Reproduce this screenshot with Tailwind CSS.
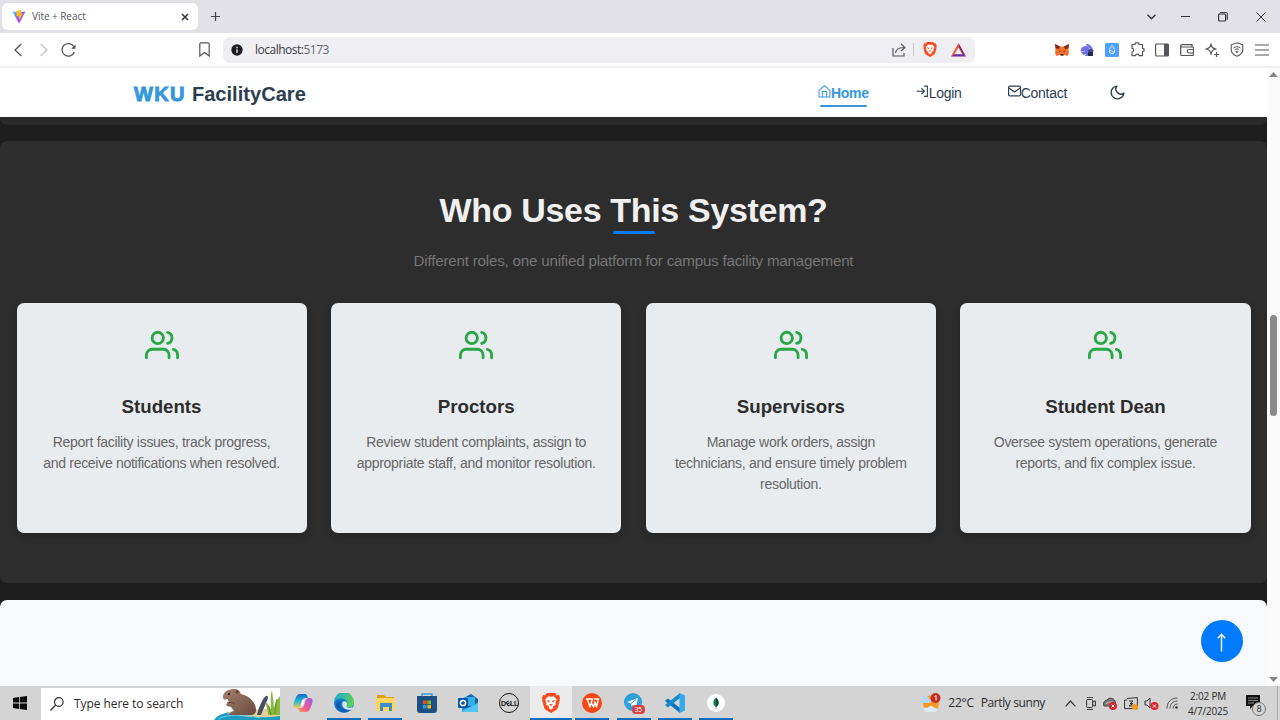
<!DOCTYPE html>
<html lang="en">
<head>
<meta charset="utf-8">
<title>Vite + React</title>
<script src="https://cdn.jsdelivr.net/npm/@tailwindcss/browser@4"></script>
</head>
<body class="w-[1280px] h-[720px] overflow-hidden flex flex-col bg-white font-['Liberation_Sans',Arial,sans-serif]">
<svg class="hidden">
  <symbol id="users" viewBox="0 0 24 24" fill="none" stroke="currentColor" stroke-width="2" stroke-linecap="round" stroke-linejoin="round"><path d="M17 21v-2a4 4 0 0 0-4-4H5a4 4 0 0 0-4 4v2"/><circle cx="9" cy="7" r="4"/><path d="M23 21v-2a4 4 0 0 0-3-3.87M16 3.13a4 4 0 0 1 0 7.75"/></symbol>
  <symbol id="lion" viewBox="0 0 20 22"><path d="M5.500 0h9l2 2.300 2-.3 1.500 3-.5 2 .3 1-2.300 8.500-1.500 2L10 22l-6-3.500-1.500-2L.2 8l.3-1L0 5l1.500-3 2 .3z" fill="#fb4a1d"/><path d="M7 3.500l3 .6 3-.6 3.500 4-1.500 3.500.3 2-3.300 2 .5 1.500L10 18.500 7.500 16.500 8 15l-3.300-2 .3-2-1.500-3.500z" fill="#fff"/><path d="M5.300 7.800l3 .5.300 1.500-1 .6zM14.700 7.800l-3 .5-.3 1.500 1 .6zM8 12.800l2-.8 2 .8-2 1.600z" fill="#fb4a1d"/></symbol>
</svg>

<!-- Tab strip -->
<div class="h-[33px] shrink-0 bg-[#e2e1e7] flex items-center pl-[2px] font-['Open_Sans','Noto_Sans',sans-serif]">
  <div class="w-[196px] h-[27px] bg-white rounded-[6px] flex items-center pl-[10px] pr-[9px]">
    <svg class="w-[14px] h-[14px]" viewBox="0 0 14 14"><defs><linearGradient id="v" x1="0" y1="0" x2="1" y2="1"><stop offset="0" stop-color="#41c9ff"/><stop offset=".6" stop-color="#a044f0"/><stop offset="1" stop-color="#bd34fe"/></linearGradient></defs><path d="M.5 1.500 7 2.500l6.500-1L7 13.500z" fill="url(#v)"/><path d="M4.500 1 9 0l.5 4h1.500L7 10 6.500 6H4.500z" fill="#ffb91c"/></svg>
    <span class="ml-[6px] text-[10px] text-[#55555c] tracking-[-0.050px]">Vite + React</span>
    <svg class="ml-auto w-[8px] h-[8px]" viewBox="0 0 8 8" stroke="#333" stroke-width="1.500"><path d="M1 1l6 6M7 1 1 7"/></svg>
  </div>
  <svg class="ml-[13px] w-[9px] h-[9px]" viewBox="0 0 9 9" stroke="#444" stroke-width="1.200"><path d="M4.500 0v9M0 4.500h9"/></svg>
  <div class="ml-auto flex items-center pr-[14px] text-[#333]">
    <svg class="w-[9px] h-[6px]" viewBox="0 0 9 6" fill="none" stroke="currentColor" stroke-width="1.400"><path d="M.5.8l4 4 4-4"/></svg>
    <svg class="ml-[25px] w-[9px] h-[3px]" viewBox="0 0 9 3"><path d="M0 1h9v1H0z" fill="currentColor"/></svg>
    <svg class="ml-[28px] w-[10px] h-[10px]" viewBox="0 0 10 10" fill="none" stroke="currentColor"><rect x=".6" y="2" width="7" height="7" rx="1" stroke-width="1.200"/><path d="M2 .6h6.500a.8.8 0 0 1 .8.8V8"/></svg>
    <svg class="ml-[28px] w-[10px] h-[10px]" viewBox="0 0 10 10" stroke="currentColor" stroke-width="1"><path d="M.5.5l9 9M9.500.5l-9 9"/></svg>
  </div>
</div>

<!-- Address toolbar -->
<div class="h-[35px] shrink-0 flex items-center border-b-2 border-[#f0f0f2] pl-[14px] text-[#55555c] font-['Open_Sans','Noto_Sans',sans-serif]">
  <svg class="w-[8px] h-[14px]" viewBox="0 0 8 14" fill="none" stroke="currentColor" stroke-width="1.300"><path d="M7.300 1 1 7l6.300 6"/></svg>
  <svg class="ml-[18px] w-[8px] h-[14px]" viewBox="0 0 8 14" fill="none" stroke="#c2c2c6" stroke-width="1.300"><path d="M.7 1 7 7 .7 13"/></svg>
  <svg class="ml-[13px] w-[15px] h-[15px]" viewBox="0 0 15 15" fill="none" stroke="currentColor" stroke-width="1.300"><path d="M13 5a6.300 6.300 0 1 0 .3 5"/><path d="M14.500 2.500v4.300h-4.300z" fill="currentColor" stroke="none"/></svg>
  <svg class="ml-[123px] w-[11px] h-[15px]" viewBox="0 0 11 15" fill="none" stroke="currentColor" stroke-width="1.200"><path d="M.8 2a1.200 1.200 0 0 1 1.200-1.200h7A1.200 1.200 0 0 1 10.200 2v12L5.500 10.500.8 14z"/></svg>
  <div class="ml-[13px] w-[752px] h-[26px] bg-[#efeef3] rounded-[7px] flex items-center pl-[8px] pr-[9px]">
    <svg class="w-[12px] h-[12px]" viewBox="0 0 12 12"><circle cx="6" cy="6" r="5.700" fill="#1c1c20"/><path d="M5.300 5.200h1.400V9H5.300zM5.300 2.800h1.400v1.400H5.300z" fill="#ddd"/></svg>
    <span class="ml-[12px] text-[12px] tracking-[-0.500px] text-[#3b3b42]">localhost:<span class="text-[#66666d]">5173</span></span>
    <svg class="ml-auto w-[14px] h-[14px]" viewBox="0 0 14 14" fill="none" stroke="currentColor" stroke-width="1.200"><path d="M1 5v8h11v-3M3.500 10c.5-4 3-5.500 8.500-5.500M9 1l4 3.500-4 3.500"/></svg>
    <span class="ml-[7px] w-px h-[13px] bg-[#ccccd2]"></span>
    <svg class="ml-[9px] w-[14px] h-[15px]" viewBox="0 0 20 22"><use href="#lion"/></svg>
    <svg class="ml-[14px] w-[15px] h-[14px] mt-px" viewBox="0 0 15 14"><path d="M7.500 0 0 13.500 3.500 11.300l4-7z" fill="#f9502a"/><path d="M7.500 0 15 13.500l-3.500-2.200-4-7z" fill="#8f1f62"/><path d="M0 13.500h15l-3.500-2.300h-8z" fill="#672a96"/></svg>
  </div>
  <div class="ml-auto pr-[11px] flex items-center gap-[11px]">
    <svg class="w-[14px] h-[14px]" viewBox="0 0 14 14"><path d="M0 1l5 2.500h4L14 1l-.6 5 .6 4-1.500 3L9 12l-2 1-2-1-3.500 1L0 10l.6-4z" fill="#f5702c"/><path d="M0 1l5 2.500L4 6 .6 5.500zM14 1 9 3.500 10 6l3.400-.5z" fill="#7a2d1c"/><path d="M3.500 7.500l2 .8-.2 1zM10.500 7.500l-2 .8.2 1zM5.500 11h3v1.500h-3z" fill="#2a2430"/></svg>
    <svg class="w-[14px] h-[14px]" viewBox="0 0 14 14"><path d="M1 9C0 5 3 3 7 3L6 1c3 0 6 2 6.500 4.500L14 8l-2 1-1 4H5l1-2-3 1z" fill="#6e6fe6"/><path d="M7 3c1 1 2 1 3 3M1 9l4-1" stroke="#b9baf8"/><path d="M8 8.500h5V13H8z" fill="#262b48"/><path d="M9 8.500V7h3v1.500" fill="none" stroke="#262b48"/></svg>
    <svg class="w-[14px] h-[14px]" viewBox="0 0 14 14"><rect width="14" height="14" rx="1.500" fill="#4da2ff"/><path d="M7 2.500C6 4.200 4.300 6 4.300 8a2.700 2.700 0 0 0 5.400 0C9.700 6 8 4.200 7 2.500z" fill="none" stroke="#e0efff" stroke-width="1"/><path d="M5 7c1 2 2.800.5 4 2.300" fill="none" stroke="#e0efff" stroke-width=".9"/></svg>
    <svg class="w-[15px] h-[15px] -mr-px" viewBox="0 0 15 15" fill="none" stroke="currentColor" stroke-width="1.200" stroke-linejoin="round"><path d="M2 2.500h3c0-2.400 4-2.400 4 0h3.500v3.800c2.300 0 2.300 3.400 0 3.400v4H9c0-2-3.500-2-3.500 0H2V10c2.200 0 2.200-3.600 0-3.600z"/></svg>
    <svg class="w-[14px] h-[14px]" viewBox="0 0 14 14"><rect x=".6" y="1" width="12.800" height="12" rx="1" fill="none" stroke="currentColor" stroke-width="1.200"/><path d="M9 1h4.500v12H9z" fill="currentColor"/></svg>
    <svg class="w-[14px] h-[14px]" viewBox="0 0 14 14" fill="none" stroke="currentColor" stroke-width="1.200"><path d="M12 4V1.600H2C.3 1.600.3 4 2 4h10.500a1 1 0 0 1 1 1v6.500a1 1 0 0 1-1 1H2a1.300 1.300 0 0 1-1.300-1.300V2.500M13.500 6.500H9a1.500 1.500 0 0 0 0 3.500h4.500"/></svg>
    <svg class="w-[14px] h-[14px]" viewBox="0 0 14 14" fill="none" stroke="currentColor" stroke-width="1.200" stroke-linejoin="round"><path d="M6 .8c.6 3.600 1.600 4.500 5.200 5.200C7.600 6.700 6.700 7.700 6 11.300 5.300 7.700 4.300 6.700.8 6 4.300 5.300 5.400 4.400 6 .8zM11.500 9v5M9 11.500h5"/></svg>
    <svg class="w-[14px] h-[15px]" viewBox="0 0 14 15" fill="none" stroke="currentColor"><path d="M7 .8l5.800 2v4.700c0 3-2.500 5.500-5.800 6.700C3.700 13 1.200 10.500 1.200 7.500V2.800z" stroke-width="1.100"/><path d="M3.500 6c2-1.800 5-1.800 7 0M4.700 7.800c1.400-1.200 3.200-1.200 4.600 0"/><circle cx="7" cy="9.700" r=".7" fill="currentColor"/></svg>
    <svg class="w-[14px] h-[12px]" viewBox="0 0 14 12" stroke="currentColor" stroke-width="1.200"><path d="M0 1h14M0 6h14M0 11h14"/></svg>
  </div>
</div>

<!-- Viewport -->
<div class="h-[618px] shrink-0 flex">
  <main class="w-[1267px] h-full bg-[#1e1e1e] flex flex-col relative">
    <header class="h-[49px] shrink-0 bg-white flex items-center pl-[134px] pr-[141px] text-[#2c3e50]">
      <div class="text-[20.100px] leading-[24px] font-bold flex items-center mt-[3px] whitespace-pre"><span class="text-[#3498db] tracking-[1.300px] [-webkit-text-stroke:0.900px_#3498db]">WKU</span><span class="ml-[6px]">FacilityCare</span></div>
      <nav class="ml-auto flex items-center text-[14px] leading-[16px] tracking-[-0.270px]">
        <a class="flex flex-col font-bold text-[#3498db] pt-[7px]">
          <span class="flex"><svg class="w-[13px] h-[13px]" viewBox="0 0 24 24" fill="none" stroke="currentColor" stroke-width="1.900" stroke-linejoin="round"><path d="M2 10 12 1l10 9v12H2zM8 22V12h8v10"/></svg>Home</span>
          <span class="mt-[4px] mx-[2px] h-[2.500px] rounded bg-[#3498db]"></span>
        </a>
        <a class="flex ml-[47px]"><svg class="w-[13px] h-[13px]" viewBox="0 0 24 24" fill="none" stroke="currentColor" stroke-width="2"><path d="M15 2h6v19h-6M1 11.500h14M10 6l5.500 5.500L10 17"/></svg>Login</a>
        <a class="flex ml-[46px]"><svg class="w-[13px] h-[13px]" viewBox="0 0 24 24" fill="none" stroke="currentColor" stroke-width="2" stroke-linejoin="round"><rect x="1" y="2" width="22" height="18" rx="2"/><path d="M1 5l11 8 11-8"/></svg>Contact</a>
        <svg class="ml-[42px] w-[17px] h-[17px]" viewBox="0 0 24 24" fill="none" stroke="currentColor" stroke-width="2" stroke-linejoin="round"><path d="M21 12.790A9 9 0 1 1 11.210 3 7 7 0 0 0 21 12.790z"/></svg>
      </nav>
    </header>
    <div class="h-[8px] shrink-0 bg-[#2a2a2a] rounded-b-[7px]"></div>
    <section class="mt-[16px] h-[442px] shrink-0 bg-[#2d2d2d] rounded-[7px] px-[16.500px] flex flex-col items-center">
      <h2 class="mt-[49px] text-[34px] leading-[40px] tracking-[-0.320px] font-bold text-[#f0f0f0] whitespace-nowrap">Who Uses This System?</h2>
      <span class="mt-px w-[42px] h-[3px] rounded bg-[#007bff]"></span>
      <p class="mt-[16px] text-[15.200px] leading-[22px] tracking-[-0.220px] text-[#757575] whitespace-nowrap">Different roles, one unified platform for campus facility management</p>
      <div class="mt-[31px] w-full h-[230px] grid grid-cols-4 gap-[24.600px] text-center">
        <article class="bg-[#e9ecef] rounded-[7px] shadow-[0_3px_8px_rgba(0,0,0,.2)] flex flex-col items-center">
          <svg class="mt-[25px] w-[34px] h-[34px] text-[#28a745]"><use href="#users"/></svg>
          <h3 class="mt-[33px] text-[18.700px] leading-[24px] font-bold text-[#2d2d2d]">Students</h3>
          <p class="mt-[12.500px] text-[14px] leading-[21.400px] tracking-[-0.290px] text-[#666] whitespace-nowrap">Report facility issues, track progress,<br>and receive notifications when resolved.</p>
        </article>
        <article class="bg-[#e9ecef] rounded-[7px] shadow-[0_3px_8px_rgba(0,0,0,.2)] flex flex-col items-center">
          <svg class="mt-[25px] w-[34px] h-[34px] text-[#28a745]"><use href="#users"/></svg>
          <h3 class="mt-[33px] text-[18.700px] leading-[24px] font-bold text-[#2d2d2d]">Proctors</h3>
          <p class="mt-[12.500px] text-[14px] leading-[21.400px] tracking-[-0.290px] text-[#666] whitespace-nowrap">Review student complaints, assign to<br>appropriate staff, and monitor resolution.</p>
        </article>
        <article class="bg-[#e9ecef] rounded-[7px] shadow-[0_3px_8px_rgba(0,0,0,.2)] flex flex-col items-center">
          <svg class="mt-[25px] w-[34px] h-[34px] text-[#28a745]"><use href="#users"/></svg>
          <h3 class="mt-[33px] text-[18.700px] leading-[24px] font-bold text-[#2d2d2d]">Supervisors</h3>
          <p class="mt-[12.500px] text-[14px] leading-[21.400px] tracking-[-0.290px] text-[#666] whitespace-nowrap">Manage work orders, assign<br>technicians, and ensure timely problem<br>resolution.</p>
        </article>
        <article class="bg-[#e9ecef] rounded-[7px] shadow-[0_3px_8px_rgba(0,0,0,.2)] flex flex-col items-center">
          <svg class="mt-[25px] w-[34px] h-[34px] text-[#28a745]"><use href="#users"/></svg>
          <h3 class="mt-[33px] text-[18.700px] leading-[24px] font-bold text-[#2d2d2d]">Student Dean</h3>
          <p class="mt-[12.500px] text-[14px] leading-[21.400px] tracking-[-0.290px] text-[#666] whitespace-nowrap">Oversee system operations, generate<br>reports, and fix complex issue.</p>
        </article>
      </div>
    </section>
    <section class="mt-[17px] flex-1 bg-[#f8f9fa] rounded-t-[7px]"></section>
    <button class="absolute right-[24px] bottom-[24px] w-[42px] h-[42px] rounded-full bg-[#007bff] flex items-center justify-center" aria-label="Back to top">
      <svg class="w-[9px] h-[19px] mt-[3px] mr-px" viewBox="0 0 9 19" fill="none" stroke="#fff" stroke-width="1.400"><path d="M4.500 18.500V1.500M.8 5.200 4.500 1.300l3.700 3.900"/></svg>
    </button>
  </main>
  <div class="w-[13px] bg-[#fbfbfb] flex flex-col items-center py-[4px]">
    <svg class="w-[9px] h-[5px]" viewBox="0 0 9 5"><path d="M4.500 0 9 5H0z" fill="#858585"/></svg>
    <span class="mt-[238px] w-[7px] h-[101px] rounded-full bg-[#8a8a8a]"></span>
    <svg class="mt-auto w-[9px] h-[5px]" viewBox="0 0 9 5"><path d="M4.500 5 9 0H0z" fill="#858585"/></svg>
  </div>
</div>

<!-- Taskbar -->
<div class="h-[34px] shrink-0 bg-[#d4d4d4] flex items-center text-[#2b2b2b] font-['Open_Sans','Noto_Sans',sans-serif]">
  <div class="w-[41px] pl-[13px]"><svg class="w-[14px] h-[14px]" viewBox="0 0 14 14" fill="#0a0a0a"><path d="M0 2l6-.9v5.500H0zM6.800 1 14 0v6.600H6.800zM0 7.400h6v5.500L0 12zM6.800 7.400H14V14l-7.200-1z"/></svg></div>
  <div class="w-[239px] h-[32px] mt-px bg-white flex items-center pl-[9px]">
    <svg class="w-[14px] h-[14px]" viewBox="0 0 14 14" fill="none" stroke="#333" stroke-width="1.200"><circle cx="8.800" cy="5" r="4.300"/><path d="M5.700 8 .5 13.500"/></svg>
    <span class="ml-[10px] text-[12px] tracking-[-0.060px] whitespace-nowrap">Type here to search</span>
    <svg class="ml-auto w-[66px] h-[32px]" viewBox="0 0 66 32"><defs><linearGradient id="fur" x1="0" y1="0" x2="1" y2="1"><stop offset="0" stop-color="#a48270"/><stop offset="1" stop-color="#6a4a3d"/></linearGradient></defs><path d="M0 32c3-5 12-9 28-9s30 2 38 5v4z" fill="#1d9cc0"/><path d="M12 25c14-4 38-3 54-5v8c-16 2-34 2-54-3z" fill="#e2d199"/><path d="M4 31c10-5 26-5 42-1" stroke="#69cfe0" fill="none"/><path d="M43 27c2-8 5-16 9-19 3-1 2 4 0 7-2 5-4 9-5 12z" fill="#4c4c66"/><path d="M9 8c1-5 6-7 11-7 4 0 6 2 7 5 9 2 15 9 15 16 0 3-2 5-5 5H16c-2-1 0-3 4-4l-3-4-4-1c-2-2 0-3 2-3l-1-3c-3 0-6-1-5-4z" fill="url(#fur)"/><path d="M13 15c3-1 6-1 8 1" fill="none" stroke="#5b3f35"/><circle cx="15" cy="6" r="1.100" fill="#1f1514"/><circle cx="23" cy="4" r="1.400" fill="#5b3f35"/><path d="M12 11h2v2h-1z" fill="#fff"/><path d="M54 27c-1-8-2-11-3-13 4 2 5 5 6 8 0-9-1-15 1-20 1 9 2 14 2 19 1-6 3-9 6-13v19z" fill="#8cb83c"/><path d="M57 27c-1-5-2-8-3-9M61 26c0-6 1-12 2-15" stroke="#4f8a2e" fill="none"/></svg>
  </div>
  <div class="ml-[2px] w-[455px] h-full grid grid-cols-11">
    <div class="flex flex-col items-center"><svg class="mt-[7px] w-[20px] h-[20px]" viewBox="0 0 20 20"><defs><linearGradient id="c1" x1="0" y1="0" x2="0" y2="1"><stop offset="0" stop-color="#1768c9"/><stop offset=".5" stop-color="#27b9d4"/><stop offset="1" stop-color="#f2c744"/></linearGradient><linearGradient id="c2" x1="1" y1="0" x2="0" y2="1"><stop offset="0" stop-color="#9560ec"/><stop offset=".6" stop-color="#f05a91"/><stop offset="1" stop-color="#fba15b"/></linearGradient></defs><path d="M7 1h5c2 0 2 2 3 4h-3c-2 0-3 2-4 6-1 3-2 4-4 4H3c-3 0-3-3-2-6l2-5c1-2 2-3 4-3z" fill="url(#c1)"/><path d="M13 19H8c-2 0-2-2-3-4h3c2 0 3-2 4-6 1-3 2-4 4-4h1c3 0 3 3 2 6l-2 5c-1 2-2 3-4 3z" fill="url(#c2)"/><path d="M9 7h2.500l-1.300 5.500H8z" fill="#f8f8ff"/></svg></div>
    <div class="flex flex-col items-center"><svg class="mt-[7px] w-[20px] h-[20px]" viewBox="0 0 20 20"><defs><linearGradient id="e1" x1="0" y1="0" x2="1" y2=".4"><stop offset="0" stop-color="#1aa4de"/><stop offset="1" stop-color="#5bd05a"/></linearGradient></defs><circle cx="10" cy="10" r="10" fill="#1478cd"/><path d="M0 9A10 10 0 0 1 20 9c0 5-4 6-7 5-1-1 1-2 0-5-2-5-10-4-13 0z" fill="url(#e1)"/><path d="M8.500 9.500c2-3 5.500 0 4.500 2.500-1 2 0 4 6 2l-1.500 2.500c-5 1.500-10.500-2-9-7z" fill="#d4e8ee"/><path d="M7 8c-2 5 1 10 9 9-6 5-14 0-14-6 1-2 3-3 5-3z" fill="#0f5dab"/></svg><span class="mt-auto w-[34px] h-[2px] bg-[#0f6cbd]"></span></div>
    <div class="flex flex-col items-center"><svg class="mt-[8px] w-[19px] h-[18px]" viewBox="0 0 19 18"><path d="M1 1h7l2 2h8v4H1z" fill="#dca014"/><path d="M1 4h17a1 1 0 0 1 1 1v12H0V5a1 1 0 0 1 1-1z" fill="#fdd561"/><path d="M4 9h12v8h-3v-4H7v4H4z" fill="#3f8fc7"/></svg><span class="mt-auto w-[34px] h-[2px] bg-[#0f6cbd]"></span></div>
    <div class="flex flex-col items-center"><svg class="mt-[7px] w-[20px] h-[20px]" viewBox="0 0 20 20"><path d="M5 5V1h10v4" fill="none" stroke="#3c9ed8" stroke-width="1.500"/><path d="M0 3h20v14a3 3 0 0 1-3 3H3a3 3 0 0 1-3-3z" fill="#1d4f82"/><path d="M6 7.500h3.600v3.600H6z" fill="#f05124"/><path d="M10.400 7.500H14v3.600h-3.600z" fill="#80bc28"/><path d="M6 11.900h3.600v3.600H6z" fill="#19a1e5"/><path d="M10.400 11.900H14v3.600h-3.600z" fill="#fcb713"/></svg></div>
    <div class="flex flex-col items-center"><svg class="mt-[8px] w-[20px] h-[18px]" viewBox="0 0 20 18"><path d="M4 5 13 0l7 5v13H4z" fill="#1265ae"/><path d="M6 3h11v9H6z" fill="#36aee8"/><path d="M4 10l8 4 8-6v9a1 1 0 0 1-1 1H5a1 1 0 0 1-1-1z" fill="#2594de"/><path d="M4 17l16-8v8l-1 1H5z" fill="#54c5f3"/><rect y="4" width="10" height="10" rx="1" fill="#0b55a4"/><circle cx="5" cy="9" r="2.600" fill="none" stroke="#fff" stroke-width="1.500"/></svg></div>
    <div class="flex flex-col items-center"><div class="mt-[7px] w-[20px] h-[20px] rounded-full border-[1.500px] border-[#111] flex items-center justify-center font-['Liberation_Sans'] font-bold text-[7px] leading-none tracking-[-0.300px] text-[#111]">D<span class="-rotate-30">E</span>LL</div></div>
    <div class="flex flex-col items-center bg-[#ebebeb]"><svg class="mt-[7px] w-[18px] h-[20px]" viewBox="0 0 20 22"><use href="#lion"/></svg><span class="mt-auto w-full h-[2px] bg-[#0f6cbd]"></span></div>
    <div class="flex flex-col items-center"><svg class="mt-[7px] w-[20px] h-[20px]" viewBox="0 0 20 20"><circle cx="10" cy="10" r="10" fill="#fb4515"/><path d="M4 6h6.500l-2.500 8L5.200 6M9 9l2.500 5 1.500-5 1.500 5L16.500 6H12" fill="none" stroke="#fff" stroke-width="1.400" stroke-linejoin="round"/></svg><span class="mt-auto w-[34px] h-[2px] bg-[#0f6cbd]"></span></div>
    <div class="flex flex-col items-center"><div class="relative mt-[7px] w-[20px] h-[20px]"><svg class="w-[18px] h-[18px]" viewBox="0 0 18 18"><circle cx="9" cy="9" r="9" fill="#2da0da"/><path d="M3 9l11-4-2 9-3-2-1.500 1.500L7 10.500z" fill="#fff"/><path d="M7 10.500l5-4" stroke="#2da0da"/></svg><span class="absolute left-[8px] top-[12px] w-[13px] h-[9px] rounded-[4px] bg-[#dc3f45] text-white text-[7px] leading-[9px] text-center tracking-[-0.300px]">35</span></div><span class="mt-auto w-[34px] h-[2px] bg-[#0f6cbd]"></span></div>
    <div class="flex flex-col items-center"><svg class="mt-[7px] w-[20px] h-[20px]" viewBox="0 0 20 20"><path d="M1 7l2-1.500L15 15v5L0 8z" fill="#0f72b8"/><path d="M1 13l2 1.500L15 5V0L0 12z" fill="#168bd2"/><path d="M14.500 0 20 2.500v15L14.500 20z" fill="#33a9ef"/></svg><span class="mt-auto w-[34px] h-[2px] bg-[#0f6cbd]"></span></div>
    <div class="flex flex-col items-center"><svg class="mt-[8px] w-[18px] h-[18px]" viewBox="0 0 18 18"><circle cx="9" cy="9" r="9" fill="#fff"/><path d="M9 3.500c3.500 3.500 3.500 7 .3 9.500V15h-.6v-2C5.500 10.500 5.500 7 9 3.500z" fill="#10804a"/><path d="M9 3.500c3.500 3.500 3.500 7 0 9.500z" fill="#0a4c36"/></svg><span class="mt-auto w-[34px] h-[2px] bg-[#0f6cbd]"></span></div>
  </div>
  <div class="ml-auto h-full flex items-center whitespace-nowrap">
    <svg class="w-[21px] h-[20px]" viewBox="0 0 21 20"><circle cx="11" cy="10.500" r="8" fill="#f59b25"/><path d="M0 8c0-2 2-3 3-2 1-4 6-3 6 0 3 0 3 4 0 4H2C1 10 0 9 0 8z" fill="#b7d5f3"/><path d="M4 17c0-3 3-3 4-2 1-3 6-2 6 0 4-1 4 4 1 4H6c-1 0-2-1-2-2z" fill="#dcebfa"/><circle cx="15.500" cy="5" r="5" fill="#c92b20"/><path d="M14.500 3.500 16 2.500v5" fill="none" stroke="#fff"/></svg>
    <span class="ml-[7px] text-[12px] tracking-[-0.250px]">22°C</span>
    <span class="ml-[7px] text-[12px] tracking-[-0.400px]">Partly sunny</span>
    <svg class="ml-[20px] w-[11px] h-[7px]" viewBox="0 0 11 7" fill="none" stroke="#333" stroke-width="1.200"><path d="M.6 6.300 5.500 1l4.900 5.300"/></svg>
    <svg class="ml-[10px] w-[10px] h-[13px]" viewBox="0 0 10 13" fill="none" stroke="#333"><path d="M1 .7c2-.5 4-.5 6 0M1 12.300c2 .5 4 .5 6 0"/><rect x=".6" y="2.500" width="6" height="8" rx="1"/><path d="M6.600 5 9.400 4v5L6.600 8"/></svg>
    <svg class="ml-[7px] w-[14px] h-[13px]" viewBox="0 0 14 13"><path d="M1 9C-1 5 3 3 4 3c2-3 7-2 8 1l1 5z" fill="#777" stroke="#444"/><path d="M3 7c3-3 6-2 8-1" stroke="#ccc" fill="none"/><circle cx="10" cy="9" r="4" fill="#d9232e"/><path d="M8.500 7.500l3 3m0-3-3 3" stroke="#fff"/></svg>
    <svg class="ml-[7px] w-[14px] h-[13px]" viewBox="0 0 14 13" fill="none" stroke="#333"><path d="M3 1.500 13.400.6v11H.6V3h2.600M5 4h4L6 6.500h3L5 9h4"/><circle cx="11" cy="10" r="3" fill="#f59a1d" stroke="none"/></svg>
    <svg class="ml-[6px] w-[15px] h-[13px]" viewBox="0 0 15 13"><path d="M1 4h2l3-3v10L3 8H1z" fill="none" stroke="#333"/><circle cx="10.500" cy="9" r="4" fill="#d9232e"/><path d="M9 7.500l3 3m0-3-3 3" stroke="#fff"/></svg>
    <svg class="ml-[7px] w-[12px] h-[12px]" viewBox="0 0 12 12" fill="none" stroke="#555"><path d="M1 11.500C1 5 5 1 11.500 1M4 11.500C4 7 7 4 11.500 4M7 11.500C7 9 9 7 11.500 7"/><circle cx="10.500" cy="10.500" r="1.300" fill="#333" stroke="none"/></svg>
    <div class="ml-[9px] mt-px w-[42px] text-center text-[10px] leading-[15px] tracking-[-0.200px]"><div>2:02 PM</div><div>4/7/2025</div></div>
    <div class="relative ml-[17px] mt-[4px] w-[20px] h-[20px]"><svg class="w-[14px] h-[15px]" viewBox="0 0 14 15"><path d="M0 0h14v11H7l-3 3v-3H0z" fill="#111"/><path d="M2 3h10M2 5.500h10M2 8h6" stroke="#aaa" stroke-width=".8"/></svg><span class="absolute left-[6px] top-[7px] w-[14px] h-[14px] rounded-full bg-[#d4d4d4] border border-[#777] text-[9px] leading-[12px] text-center">8</span></div>
    <span class="ml-[11px] w-px h-full bg-[#a8a8a8] mr-[2px]"></span>
  </div>
</div>
</body>
</html>
